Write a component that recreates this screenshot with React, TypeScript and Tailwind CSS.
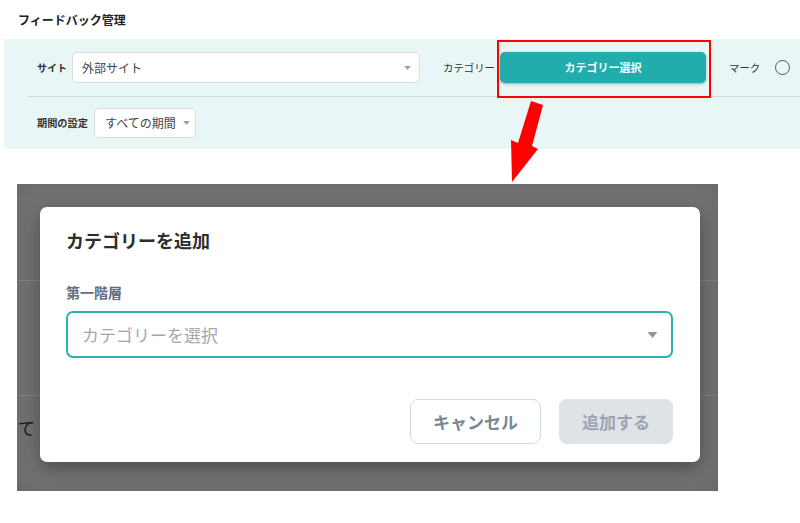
import React from "react";

const jp = { fontFamily: '"Noto Sans CJK JP", "Noto Sans", sans-serif' };

function Caret({ className = "" }: { className?: string }) {
  return (
    <svg viewBox="0 0 10 6" className={className} aria-hidden="true">
      <path d="M0 0h10L5 6z" fill="currentColor" />
    </svg>
  );
}

function FilterPanel() {
  return (
    <div className="relative ml-[4px] bg-[#e8f6f5]">
      <div className="flex h-[57px] items-center whitespace-nowrap pl-[33px]">
        <span className="w-[29px] shrink-0 text-[10px] font-bold text-[#333]">サイト</span>
        <div className="ml-[6px] flex h-[31px] w-[348px] shrink-0 items-center justify-between rounded-[5px] border border-[#d8dcdf] bg-white pl-[9px] pr-[8px]">
          <span className="text-[12px] text-[#444]">外部サイト</span>
          <Caret className="h-[4px] w-[7px] text-[#9aa1a8]" />
        </div>
        <span className="ml-[23px] w-[52px] shrink-0 text-[10.4px] text-[#333]">カテゴリー</span>
        <button className="ml-[5px] flex h-[31px] w-[206px] shrink-0 items-center justify-center rounded-[5px] bg-[#22adad] text-[11px] font-bold text-white shadow-[0_1px_3px_rgba(0,0,0,0.3)]">
          カテゴリー選択
        </button>
        <span className="ml-[23px] shrink-0 text-[10.4px] text-[#333]">マーク</span>
        <span className="ml-[15px] h-[15px] w-[15px] shrink-0 rounded-full border-[1.5px] border-[#555]" />
      </div>
      <div className="ml-[23px] h-px bg-[#cfdcdb]" />
      <div className="flex h-[52px] items-center whitespace-nowrap pl-[33px]">
        <span className="w-[51px] shrink-0 text-[10.2px] font-bold text-[#333]">期間の設定</span>
        <div className="ml-[6px] flex h-[30px] w-[102px] shrink-0 items-center gap-[7px] rounded-[5px] border border-[#d8dcdf] bg-white pl-[10px]">
          <span className="text-[12px] text-[#444]">すべての期間</span>
          <Caret className="h-[4px] w-[7px] text-[#9aa1a8]" />
        </div>
      </div>
      {/* highlight frame around the category button */}
      <div className="pointer-events-none absolute left-[493px] top-[1px] h-[58px] w-[214px] border-2 border-[#ff0000]" />
    </div>
  );
}

function Arrow() {
  return (
    <svg className="pointer-events-none absolute left-[505px] top-[98px]" width="45" height="88" viewBox="0 0 45 88">
      <polygon points="26,3 38,7 27,48 33,51 7,84 6,42 13,45" fill="#ff0000" />
    </svg>
  );
}

function AddCategoryDialog() {
  return (
    <div className="relative ml-[17px] mt-[35px] h-[307px] w-[701px] overflow-hidden bg-[#747474]">
      {/* page underneath the backdrop */}
      <div className="absolute left-0 right-0 top-[96px] h-px bg-[#858585]" />
      <div className="absolute left-0 right-0 top-[211px] h-px bg-[#858585]" />
      <span className="absolute left-[1px] top-[231px] text-[17px] text-[#1a1a1a]">て</span>
      <div className="absolute inset-0 shadow-[inset_0_0_30px_rgba(0,0,0,0.12)]" />

      <div className="relative ml-[23px] mt-[23px] flex h-[255px] w-[660px] flex-col rounded-[7px] bg-white pl-[26px] pr-[27px] shadow-[0_6px_18px_rgba(0,0,0,0.35)]">
        <h2 className="mt-[20px] text-[18px] font-bold leading-[26px] text-[#2d2d2d]">カテゴリーを追加</h2>
        <label className="mt-[29px] text-[14px] font-bold leading-[20px] text-[#607080]">第一階層</label>
        <div className="mt-[9px] flex h-[47px] items-center justify-between rounded-[7px] border-2 border-[#2ab3b1] pl-[14px] pr-[13px]">
          <span className="text-[17px] text-[#a6a6a6]">カテゴリーを選択</span>
          <Caret className="h-[6px] w-[11px] text-[#8a96a3]" />
        </div>
        <div className="mt-[41px] flex justify-end gap-[18px]">
          <button className="flex h-[45px] w-[131px] items-center justify-center rounded-[8px] border border-[#d3dae1] bg-white text-[17px] font-bold text-[#7a8795]">
            キャンセル
          </button>
          <button className="flex h-[45px] w-[114px] items-center justify-center rounded-[8px] bg-[#dfe3e8] text-[17px] font-bold text-[#9aa6b3]">
            追加する
          </button>
        </div>
      </div>
    </div>
  );
}

export default function App() {
  return (
    <div className="relative h-[523px] w-[800px] overflow-hidden bg-white" style={jp}>
      <div className="flex h-[39px] items-center pl-[18px]">
        <h1 className="text-[12px] font-bold text-[#222]">フィードバック管理</h1>
      </div>
      <FilterPanel />
      <AddCategoryDialog />
      <Arrow />
    </div>
  );
}
